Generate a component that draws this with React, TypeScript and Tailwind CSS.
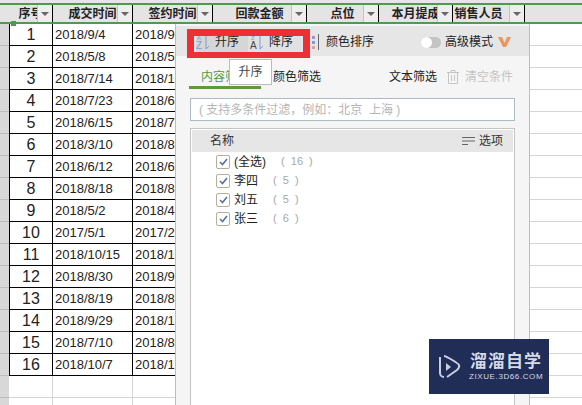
import React from 'react';

const cjk = "font-['Liberation_Sans','Noto_Sans_CJK_SC',sans-serif]";

const rows = [
  ['2018/9/4', '2018/9'],
  ['2018/5/8', '2018/5'],
  ['2018/7/14', '2018/1'],
  ['2018/7/23', '2018/6'],
  ['2018/6/15', '2018/7'],
  ['2018/3/10', '2018/8'],
  ['2018/6/12', '2018/6'],
  ['2018/8/18', '2018/8'],
  ['2018/5/2', '2018/4'],
  ['2017/5/1', '2017/2'],
  ['2018/10/15', '2018/1'],
  ['2018/8/30', '2018/9'],
  ['2018/8/19', '2018/8'],
  ['2018/9/29', '2018/1'],
  ['2018/7/10', '2018/8'],
  ['2018/10/7', '2018/1'],
];

const headers = [
  { label: '序号', w: 'w-[44px]', pad: '' },
  { label: '成交时间', w: 'w-[80px]', pad: '' },
  { label: '签约时间', w: 'w-[80px]', pad: '' },
  { label: '回款金额', w: 'w-[94px]', pad: '' },
  { label: '点位', w: 'w-[72px]', pad: '' },
  { label: '本月提成', w: 'w-[74px]', pad: '' },
  { label: '销售人员', w: 'w-[72px]', pad: 'pr-[20px]' },
];

const people = [
  { name: '(全选)', count: '(  16  )', gap: 'ml-[15px]' },
  { name: '李四', count: '(  5  )', gap: 'ml-[15px]' },
  { name: '刘五', count: '(  5  )', gap: 'ml-[15px]' },
  { name: '张三', count: '(  6  )', gap: 'ml-[15px]' },
];

function HeaderCell({ label, w, pad }: { label: string; w: string; pad: string }) {
  return (
    <div className={`${w} h-full shrink-0 relative flex items-center justify-center overflow-hidden border-r border-black bg-[#e4e4e4] ${pad}`}>
      <span className="text-[12px] font-bold text-[#222] whitespace-nowrap">{label}</span>
      <div className="absolute right-0 top-0 bottom-0 w-[15px] flex items-center justify-center bg-[#eeeeee] border-l border-[#c4c4c4]">
        <div className="w-0 h-0 border-x-[4px] border-x-transparent border-t-[4px] border-t-[#666]" />
      </div>
    </div>
  );
}

function SortIcon({ top, bottom, topColor, bottomColor }: { top: string; bottom: string; topColor: string; bottomColor: string }) {
  return (
    <svg width="15" height="15" viewBox="0 0 15 15" className="shrink-0">
      <text x="1" y="5" fontSize="6" fill={topColor} fontFamily="Liberation Sans">{top}</text>
      <text x="0" y="14" fontSize="10" fill={bottomColor} fontFamily="Liberation Sans">{bottom}</text>
      <path d="M10 0v14l3-3" fill="none" stroke="#7e9bd6" strokeWidth="1" />
    </svg>
  );
}

export default function App() {
  return (
    <div className={`w-[582px] h-[405px] relative overflow-hidden bg-white ${cjk}`}>
      {/* sheet */}
      <div className="h-[3px] bg-[#e6e6e6]" />
      <div className="h-[21px] flex border-y-[2px] border-[#4f9a4f] bg-[#e4e4e4]">
        <div className="w-[9px] shrink-0" />
        {headers.map((h) => (
          <HeaderCell key={h.label} {...h} />
        ))}
      </div>
      <div className="flex">
        <div className="w-[9px] shrink-0 bg-[#d8d8d8]">
          {[...rows, ...rows].slice(0, 18).map((_, i) => (
            <div key={i} className="h-[22px] border-b border-[#bcbcbc]" />
          ))}
        </div>
        <div>
          {rows.map((r, i) => (
            <div key={i} className="h-[22px] flex">
              <div className="w-[44px] flex items-center justify-center border-x border-b border-black text-[16px] text-[#222]">{i + 1}</div>
              <div className="w-[80px] flex items-center pl-[2px] border-r border-b border-black text-[13px] text-[#222]">{r[0]}</div>
              <div className="w-[80px] flex items-center pl-[2px] border-r border-b border-black text-[13px] text-[#222]">{r[1]}</div>
              <div className="w-[94px] border-r border-b border-black" />
              <div className="w-[72px] border-r border-b border-black" />
              <div className="w-[74px] border-r border-b border-black" />
              <div className="w-[72px] border-r border-b border-black" />
              <div className="w-[57px] border-b border-[#d4d4d4]" />
            </div>
          ))}
          {[0, 1].map((i) => (
            <div key={i} className="h-[22px] flex">
              <div className="w-[44px] border-r border-b border-[#d4d4d4]" />
              <div className="w-[80px] border-r border-b border-[#d4d4d4]" />
              <div className="w-[80px] border-r border-b border-[#d4d4d4]" />
              <div className="w-[369px] border-b border-[#d4d4d4]" />
            </div>
          ))}
        </div>
      </div>

      {/* fill handle on the selected header row */}
      <div className="absolute left-[11px] top-[21px] w-[5px] h-[5px] bg-[#4f9a4f]" />

      {/* filter popup */}
      <div className="absolute left-[175px] top-[24px] w-[355px] h-[381px] bg-[#f5f5f5] border-x border-[#bdbdbd] flex flex-col">
        <div className="h-[30px] mt-[2px] pt-[2px] bg-[#e6e6e6] flex items-center pl-[20px] pr-[18px] text-[12px] text-[#222]">
          <div className="flex items-center w-[52px] h-[22px] bg-[#d6d6d6]">
            <SortIcon top="A" bottom="Z" topColor="#7e9bd6" bottomColor="#7e9bd6" />
            <span className="ml-[4px]">升序</span>
          </div>
          <div className="flex items-center h-[22px] w-[53px] pl-[2px] bg-[#e1e1e1]">
            <SortIcon top="Z" bottom="A" topColor="#7e9bd6" bottomColor="#444" />
            <span className="ml-[4px]">降序</span>
          </div>
          <div className="flex items-center ml-[11px] h-[16px] gap-[3px] shrink-0">
            <div className="flex flex-col gap-[2px]">
              <div className="w-[3px] h-[3px] bg-[#a98fc8]" />
              <div className="w-[3px] h-[3px] bg-[#7e9bd6]" />
              <div className="w-[3px] h-[3px] bg-[#d9a0a0]" />
            </div>
            <div className="w-px h-[16px] bg-[#666]" />
          </div>
          <span className="ml-[7px]">颜色排序</span>
          <div className="ml-auto flex items-center">
            <div className="w-[20px] h-[11px] rounded-full bg-[#c4c4c4] relative">
              <div className="absolute left-0 top-0 w-[11px] h-[11px] rounded-full bg-white" />
            </div>
            <span className="ml-[4px]">高级模式</span>
            <svg width="13" height="12" viewBox="0 0 13 12" className="ml-[5px]">
              <path d="M0 1h4l2.5 6L9 1h4L8 11H5z" fill="#f0955a" />
            </svg>
          </div>
        </div>

        <div className="h-[36px] relative flex items-center pt-[6px] text-[12px] text-[#222]">
          <span className="ml-[25px] text-[#4f9a3f]">内容筛选</span>
          <span className="ml-[24px]">颜色筛选</span>
          <div className="ml-auto flex items-center mr-[16px]">
            <span>文本筛选</span>
            <svg width="12" height="14" viewBox="0 0 12 14" className="ml-[10px]" fill="none" stroke="#c4c4c4">
              <path d="M0 2.5h12M4 2.5V.5h4v2M1.5 2.5v11h9v-11M4.5 5v6M7.5 5v6" />
            </svg>
            <span className="ml-[6px] text-[#c4c4c4]">清空条件</span>
          </div>
          <div className="absolute left-[13px] bottom-[3px] w-[72px] h-[3px] bg-[#5c9a3c]" />
        </div>

        <div className="mx-[14px] mt-[6px] h-[23px] bg-white border border-[#a9bcc4] flex items-center pl-[8px] text-[12px] text-[#b5b5b5]">
          ( 支持多条件过滤，例如：北京&nbsp;&nbsp;上海 )
        </div>

        <div className="mx-[14px] mt-[7px] flex-1 bg-white border-x border-t border-[#c4c4c4]">
          <div className="h-[22px] mt-px mx-px bg-[#e6e6e6] flex items-center pl-[18px] pr-[10px] text-[12px] text-[#333]">
            <span>名称</span>
            <svg width="13" height="10" viewBox="0 0 13 10" className="ml-auto mr-[4px]" stroke="#666">
              <path d="M0 1.5h13M0 5h13M0 8.5h6" />
            </svg>
            <span>选项</span>
          </div>
          <div className="pl-[25px]">
            {people.map((p) => (
              <div key={p.name} className="h-[19px] flex items-center text-[12px] text-[#222]">
                <div className="w-[14px] h-[14px] border border-[#b9ada0] rounded-[2px] flex items-center justify-center bg-white">
                  <svg width="9" height="8" viewBox="0 0 9 8" fill="none" stroke="#54729f" strokeWidth="1.6">
                    <path d="M1 4l2.5 2.5L8 1" />
                  </svg>
                </div>
                <span className="ml-[4px]">{p.name}</span>
                <span className={`${p.gap} text-[11px] text-[#a8a8a8] whitespace-pre`}>{p.count}</span>
              </div>
            ))}
          </div>
        </div>
      </div>

      {/* red box drawn over the sort buttons */}
      <div className="absolute left-[187px] top-[29px] w-[123px] h-[29px] border-x-[7px] border-t-[7px] border-b-[6px] border-[#ee2f36] pointer-events-none" />

      {/* tooltip */}
      <div className="absolute left-[229px] top-[59px] w-[43px] h-[26px] bg-white border border-[#bbb] flex items-center justify-center text-[12px] text-[#444]">
        升序
      </div>

      {/* watermark */}
      <div className="absolute left-[429px] top-[339px] w-[120px] h-[55px] bg-[#1f2d57] flex items-center pl-[8px] text-[#d6dae6]">
        <svg width="25" height="26" viewBox="0 0 25 26" fill="none" stroke="#c9cedd" strokeWidth="2">
          <path d="M3 3v16a4 4 0 0 0 4 4" />
          <path d="M7 2c2 0 14 7 15 9s0 3-2 5l-10 7" />
          <path d="M9 9v8l5-4z" fill="#c9cedd" stroke="none" />
        </svg>
        <div className="ml-[7px] flex flex-col items-center">
          <span className="text-[17px] leading-[21px] tracking-[1px] font-bold whitespace-nowrap">溜溜自学</span>
          <span className="text-[8px] leading-[10px] tracking-[0.6px] whitespace-nowrap">ZIXUE.3D66.COM</span>
        </div>
      </div>
    </div>
  );
}
